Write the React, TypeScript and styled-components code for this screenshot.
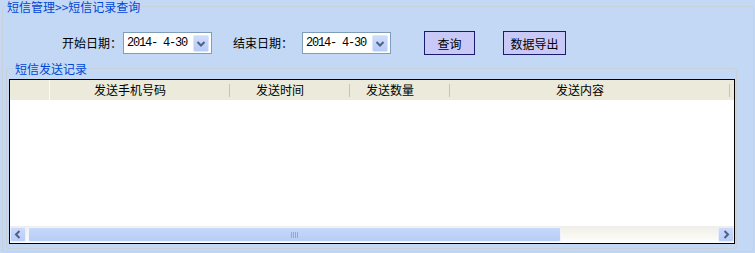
import * as React from 'react';
import styled, { createGlobalStyle } from 'styled-components';

interface Column {
    title: string;
    width: number;
}

const COLUMN_LIST: Column[] = [
    { title: '发送手机号码', width: 180 },
    { title: '发送时间', width: 120 },
    { title: '发送数量', width: 100 },
    { title: '发送内容', width: 280 },
];

const GlobalStyle = createGlobalStyle`
    html, body {
        margin: 0;
        padding: 0;
        background: #c2d8f4;
    }

    body {
        font-family: "Noto Sans CJK SC", "Liberation Sans", sans-serif;
        font-size: 12px;
        color: #000;
    }
`;

const ChevronDown: React.FC = () => (
    <svg width="16" height="17" viewBox="0 0 16 17">
        <path d="M4.5 7 L8 10.5 L11.5 7" fill="none" stroke="#4d6185" strokeWidth="2" />
    </svg>
);

const ChevronSide: React.FC<{ right?: boolean }> = ({ right }) => (
    <svg width="14" height="13" viewBox="0 0 14 13">
        <path
            d={right ? 'M5.5 3 L9 6.5 L5.5 10' : 'M8.5 3 L5 6.5 L8.5 10'}
            fill="none"
            stroke="#4d6185"
            strokeWidth="2"
        />
    </svg>
);

const Grip: React.FC = () => (
    <svg width="8" height="6" viewBox="0 0 8 6">
        {[0, 2, 4, 6].map(x => (
            <rect key={x} x={x} y={0} width={1} height={6} fill="#8ea8dc" />
        ))}
    </svg>
);

const DateField: React.FC<{ value: string; offset: number }> = ({ value, offset }) => (
    <DateBox $offset={offset}>
        <DateText>{value}</DateText>
        <DropButton>
            <ChevronDown />
        </DropButton>
    </DateBox>
);

const App: React.FC = () => (
    <Page>
        <GlobalStyle />
        <OuterGroup>
            <Caption $indent={2}>短信管理&gt;&gt;短信记录查询</Caption>
            <FilterBar>
                <FieldLabel $offset={0}>开始日期：</FieldLabel>
                <DateField value="2014- 4-30" offset={1} />
                <FieldLabel $offset={21}>结束日期：</FieldLabel>
                <DateField value="2014- 4-30" offset={9} />
                <ActionButton $offset={33} $width={51}>
                    查询
                </ActionButton>
                <ActionButton $offset={28} $width={63}>
                    数据导出
                </ActionButton>
            </FilterBar>
            <InnerGroup>
                <Caption $indent={4}>短信发送记录</Caption>
                <Grid>
                    <HeaderRow>
                        <RowHeaderCell />
                        {COLUMN_LIST.map(column => (
                            <HeaderCell key={column.title} $width={column.width}>
                                {column.title}
                            </HeaderCell>
                        ))}
                    </HeaderRow>
                    <GridBody />
                    <ScrollBar>
                        <ArrowButton>
                            <ChevronSide />
                        </ArrowButton>
                        <Track>
                            <Thumb>
                                <Grip />
                            </Thumb>
                        </Track>
                        <ArrowButton>
                            <ChevronSide right />
                        </ArrowButton>
                    </ScrollBar>
                </Grid>
            </InnerGroup>
        </OuterGroup>
    </Page>
);

const Page = styled.div`
    width: 755px;
    height: 253px;
    overflow: hidden;
    padding-left: 2px;
    box-sizing: border-box;
`;

const GroupBox = styled.fieldset`
    box-sizing: border-box;
    min-width: 0;
    margin: 0;
    border: 1px solid #c9d0d9;
    border-radius: 3px;
`;

const OuterGroup = styled(GroupBox)`
    width: 752px;
    padding: 0 0 2px 0;
`;

const InnerGroup = styled(GroupBox)`
    width: 731px;
    margin: 7px 0 0 3px;
    padding: 0 1px 4px 2px;
`;

const Caption = styled.legend<{ $indent: number }>`
    margin-left: ${p => p.$indent}px;
    padding: 0 2px;
    height: 13px;
    line-height: 13px;
    font-size: 12px;
    color: #0046d5;
    white-space: nowrap;
`;

const FilterBar = styled.div`
    display: flex;
    align-items: center;
    height: 24px;
    margin-top: 18px;
    padding-left: 59px;
`;

const FieldLabel = styled.span<{ $offset: number }>`
    width: 60px;
    margin-left: ${p => p.$offset}px;
    font-size: 12px;
    line-height: 14px;
    white-space: nowrap;
`;

const DateBox = styled.div<{ $offset: number }>`
    display: flex;
    align-items: center;
    box-sizing: border-box;
    width: 89px;
    height: 22px;
    margin-left: ${p => p.$offset}px;
    padding: 0 2px 0 3px;
    border: 1px solid #7f9db9;
    background: #fff;
`;

const DateText = styled.span`
    flex: 1;
    font-family: "Liberation Mono", "DejaVu Sans Mono", monospace;
    font-size: 12px;
    letter-spacing: -1.2px;
    line-height: 14px;
    white-space: pre;
`;

const DropButton = styled.span`
    display: flex;
    box-sizing: border-box;
    width: 16px;
    height: 17px;
    border: 1px solid #dbe5fb;
    border-radius: 2px;
    background: linear-gradient(#cfddfd, #b7cbf6);

    svg {
        margin: -1px;
    }
`;

const ActionButton = styled.button<{ $offset: number; $width: number }>`
    box-sizing: border-box;
    width: ${p => p.$width}px;
    height: 24px;
    margin-left: ${p => p.$offset}px;
    padding: 0;
    border: 1px solid #1a1a6e;
    background: #c9c9f7;
    font-family: "Noto Sans CJK SC", sans-serif;
    font-size: 12px;
    color: #000;
`;

const Grid = styled.div`
    display: flex;
    flex-direction: column;
    box-sizing: border-box;
    width: 726px;
    height: 165px;
    margin-top: 4px;
    border: 1px solid #000;
    background: #fff;
`;

const HeaderRow = styled.div`
    display: flex;
    flex-shrink: 0;
    height: 20px;
    background: #ebeadb;
`;

const RowHeaderCell = styled.div`
    box-sizing: border-box;
    width: 40px;
    border-right: 1px solid #fbfbf8;
`;

const HeaderCell = styled.div<{ $width: number }>`
    box-sizing: border-box;
    width: ${p => p.$width}px;
    padding-right: 20px;
    line-height: 20px;
    text-align: center;
    white-space: nowrap;
    background: linear-gradient(#c7c5b2, #c7c5b2) no-repeat right 0 top 4px / 1px 13px;
`;

const GridBody = styled.div`
    flex: 1;
    border-bottom: 1px solid #eeeeea;
`;

const ScrollBar = styled.div`
    display: flex;
    flex-shrink: 0;
    height: 15px;
    margin-bottom: 1px;
    background: linear-gradient(#f1efe8, #fdfdfa);
`;

const ArrowButton = styled.div`
    display: flex;
    align-items: center;
    justify-content: center;
    box-sizing: border-box;
    width: 16px;
    height: 15px;
    border: 1px solid #e6eefd;
    border-radius: 2px;
    background: linear-gradient(#cbdafc, #b9cdf7);
`;

const Track = styled.div`
    flex: 1;
    display: flex;
    padding-left: 2px;
`;

const Thumb = styled.div`
    display: flex;
    align-items: center;
    justify-content: center;
    box-sizing: border-box;
    width: 533px;
    height: 15px;
    border: 1px solid #eef3fd;
    border-radius: 2px;
    background: linear-gradient(#c6d8fb, #b8ccf5);
`;

export default App;
